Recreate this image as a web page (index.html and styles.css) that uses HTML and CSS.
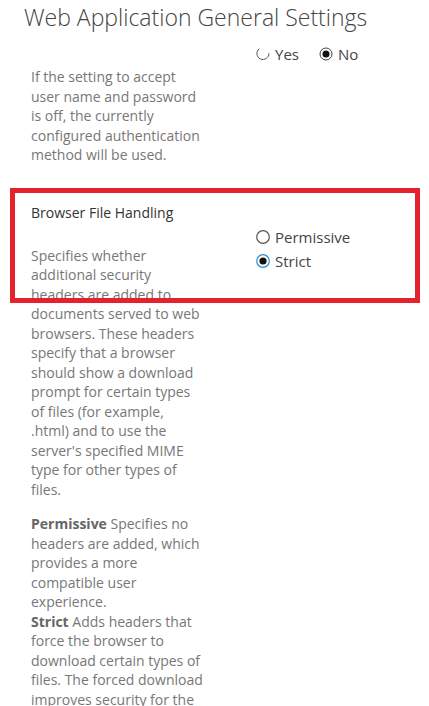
FILE: index.html
```html
<!DOCTYPE html>
<html lang="en">
<head>
  <meta charset="UTF-8">
  <title>Web Application General Settings</title>
  <link rel="stylesheet" href="styles.css">
</head>
<body>
  <div class="page">
    <h1 class="title">Web Application General Settings</h1>

    <div class="section first">
      <div class="desc-col">
        <p class="desc">If the setting to accept<br>user name and password<br>is off, the currently<br>configured authentication<br>method will be used.</p>
      </div>
      <div class="ctrl-col">
        <div class="inline-radios">
          <label class="radio">
            <svg class="radio-icon" viewBox="0 0 14 14" width="14" height="14"><path d="M3.2 1.8 A6 6 0 1 0 12.9 6.2" fill="none" stroke="#555" stroke-width="1"/></svg>
            Yes
          </label>
          <label class="radio">
            <svg class="radio-icon" viewBox="0 0 14 14" width="14" height="14"><circle cx="7" cy="7" r="6" fill="#fff" stroke="#444" stroke-width="1"/><circle cx="7" cy="7" r="3.5" fill="#111"/></svg>
            No
          </label>
        </div>
      </div>
    </div>

    <div class="section second">
      <div class="desc-col">
        <h3 class="section-title">Browser File Handling</h3>
        <p class="desc">Specifies whether<br>additional security<br>headers are added to<br>documents served to web<br>browsers. These headers<br>specify that a browser<br>should show a download<br>prompt for certain types<br>of files (for example,<br>.html) and to use the<br>server's specified MIME<br>type for other types of<br>files.</p>
        <p class="desc"><b>Permissive</b> Specifies no<br>headers are added, which<br>provides a more<br>compatible user<br>experience.<br><b>Strict</b> Adds headers that<br>force the browser to<br>download certain types of<br>files. The forced download<br>improves security for the<br>server by disallowing the<br>automatic execution of<br>Web content that<br>contains scripts.</p>
      </div>
      <div class="ctrl-col">
        <label class="radio stack">
          <svg class="radio-icon" viewBox="0 0 14 14" width="14" height="14"><circle cx="7" cy="7" r="6.3" fill="#fff" stroke="#555" stroke-width="1.2"/></svg>
          Permissive
        </label>
        <label class="radio stack">
          <svg class="radio-icon" viewBox="0 0 14 14" width="14" height="14"><circle cx="7" cy="7" r="6.3" fill="#fff" stroke="#2a8dd4" stroke-width="1.2"/><circle cx="7" cy="7" r="3.6" fill="#111"/></svg>
          Strict
        </label>
      </div>
      <div class="highlight"></div>
    </div>
  </div>
</body>
</html>
```

FILE: styles.css
```css
body {
  margin: 0;
  background: #fff;
  font-family: "Open Sans", "Noto Sans", sans-serif;
  color: #444;
}
.page {
  padding: 0;
}
.title {
  margin: 0;
  padding: 1px 0 0 24px;
  font-size: 23px;
  font-weight: 300;
  color: #444;
  line-height: 32px;
  white-space: nowrap;
}
.section {
  position: relative;
  display: grid;
  grid-template-columns: 225px 1fr;
  padding-left: 31px;
}
.desc-col {
  width: 200px;
}
.desc {
  margin: 0;
  font-size: 14px;
  line-height: 19.5px;
  color: #777;
  white-space: nowrap;
}
.desc b {
  color: #666;
}
.first .desc-col {
  padding-top: 34px;
}
.first .ctrl-col {
  padding-top: 9px;
}
.inline-radios {
  display: flex;
  gap: 20px;
}
.radio {
  display: flex;
  align-items: center;
  gap: 5px;
  font-size: 15px;
  color: #444;
  line-height: 24px;
}
.second {
  margin-top: 23px;
  padding-top: 15px;
}
.section-title {
  margin: 0 0 23px;
  font-size: 14px;
  font-weight: 400;
  color: #333;
  line-height: 20px;
}
.second .desc + .desc {
  margin-top: 15px;
}
.second .ctrl-col {
  padding-top: 22px;
}
.highlight {
  position: absolute;
  left: 10px;
  top: 0;
  width: 400px;
  height: 105px;
  border: 5px solid #e3222d;
}
```
